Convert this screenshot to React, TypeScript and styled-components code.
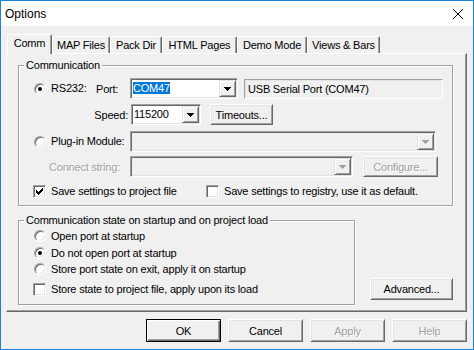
import React, { FC, ReactNode } from 'react';
import styled, { createGlobalStyle } from 'styled-components';

const GlobalStyle = createGlobalStyle`
  html, body {
    margin: 0;
    padding: 0;
    background: #f0f0f0;
  }

  * {
    box-sizing: border-box;
  }
`;

const Window = styled.div`
  width: 474px;
  height: 350px;
  display: flex;
  flex-direction: column;
  border: 1px solid #1883d7;
  background: #f0f0f0;
  color: #000;
  font-family: "Liberation Sans", Arial, sans-serif;
  font-size: 11px;
  letter-spacing: -0.2px;
  overflow: hidden;
`;

const TitleBar = styled.header`
  flex: none;
  height: 25px;
  display: flex;
  align-items: center;
  justify-content: space-between;
  padding-left: 4px;
  background: #fff;
  font-size: 12px;
  letter-spacing: 0;
`;

const CloseBox = styled.div`
  width: 30px;
  height: 25px;
  display: flex;
  align-items: center;
  justify-content: center;
`;

const Body = styled.div`
  flex: 1;
  display: flex;
  flex-direction: column;
  padding: 8px 6px 7px 5px;
`;

const TabStrip = styled.div`
  flex: none;
  height: 19px;
  display: flex;
  align-items: flex-end;
  padding-left: 1px;
  position: relative;
  z-index: 1;
`;

const Tab = styled.div<{ $w: number; $active?: boolean }>`
  flex: none;
  width: ${p => p.$w}px;
  height: ${p => (p.$active ? 20 : 17)}px;
  margin-bottom: ${p => (p.$active ? -1 : 0)}px;
  display: flex;
  justify-content: center;
  padding-top: 2px;
  line-height: 13px;
  background: #f0f0f0;
  border: 1px solid;
  border-bottom: none;
  border-color: #fff #696969 transparent #fff;
  border-radius: 2px 2px 0 0;
  box-shadow: inset -1px 0 0 #a0a0a0;
  white-space: nowrap;
`;

const Panel = styled.section`
  flex: none;
  height: 259px;
  display: flex;
  flex-direction: column;
  padding: 11px 13px 0 11px;
  border: 1px solid;
  border-color: #fff #696969 #696969 #fff;
  box-shadow: inset -1px -1px 0 #a0a0a0;
`;

const GroupBox = styled.div<{ $w?: number; $mt?: number }>`
  flex: none;
  width: ${p => (p.$w ? `${p.$w}px` : 'auto')};
  margin-top: ${p => p.$mt ?? 0}px;
  display: flex;
  flex-direction: column;
  padding: 0 0 7px 14px;
  border: 1px solid #a0a0a0;
  box-shadow: inset 1px 1px 0 #fff, 1px 1px 0 #fff;
`;

const Caption = styled.div`
  align-self: flex-start;
  margin: -7px 0 0 -9px;
  padding: 0 2px;
  line-height: 13px;
  background: #f0f0f0;
  white-space: nowrap;
`;

const Row = styled.div<{ $h: number; $mt: number }>`
  flex: none;
  height: ${p => p.$h}px;
  margin-top: ${p => p.$mt}px;
  display: flex;
  align-items: center;
`;

const Option = styled.label<{ $w?: number; $indent?: number }>`
  flex: none;
  width: ${p => (p.$w ? `${p.$w}px` : 'auto')};
  padding-left: ${p => p.$indent ?? 0}px;
  display: flex;
  align-items: center;
  gap: 5px;
  line-height: 13px;
  white-space: nowrap;
`;

const FieldLabel = styled.span<{ $w: number; $right?: boolean; $indent?: number; $disabled?: boolean }>`
  flex: none;
  width: ${p => p.$w}px;
  padding-left: ${p => p.$indent ?? 0}px;
  padding-right: ${p => (p.$right ? 3 : 0)}px;
  text-align: ${p => (p.$right ? 'right' : 'left')};
  color: ${p => (p.$disabled ? '#a0a0a0' : '#000')};
  text-shadow: ${p => (p.$disabled ? '1px 1px 0 #fff' : 'none')};
  white-space: nowrap;
`;

const RadioMark = styled.span<{ $on?: boolean }>`
  flex: none;
  width: 12px;
  height: 12px;
  display: flex;
  align-items: center;
  justify-content: center;
  border-radius: 50%;
  border: 1px solid;
  border-color: #a0a0a0 #fff #fff #a0a0a0;
  background: #fff;
  box-shadow: inset 1px 1px 0 #696969, inset -1px -1px 0 #e3e3e3;

  &::after {
    content: '';
    display: ${p => (p.$on ? 'block' : 'none')};
    width: 4px;
    height: 4px;
    border-radius: 50%;
    background: #000;
  }
`;

const CheckMark = styled.span`
  flex: none;
  width: 13px;
  height: 13px;
  display: flex;
  align-items: center;
  justify-content: center;
  border: 1px solid;
  border-color: #a0a0a0 #fff #fff #a0a0a0;
  background: #fff;
  box-shadow: inset 1px 1px 0 #696969, inset -1px -1px 0 #e3e3e3;
`;

const ComboFrame = styled.div<{ $w: number; $ml?: number; $disabled?: boolean }>`
  flex: none;
  width: ${p => p.$w}px;
  height: 21px;
  margin-left: ${p => p.$ml ?? 0}px;
  display: flex;
  align-items: center;
  padding: 1px;
  border: 1px solid;
  border-color: #a0a0a0 #fff #fff #a0a0a0;
  background: ${p => (p.$disabled ? '#f0f0f0' : '#fff')};
  box-shadow: inset 1px 1px 0 #696969, inset -1px -1px 0 #e3e3e3;
`;

const ComboText = styled.div`
  flex: 1;
  padding-left: 1px;
  line-height: 13px;
  white-space: nowrap;
  overflow: hidden;
`;

const Selected = styled.span`
  background: #0078d7;
  color: #fff;
`;

const DropButton = styled.div`
  flex: none;
  width: 17px;
  align-self: stretch;
  display: flex;
  align-items: center;
  justify-content: center;
  border: 1px solid;
  border-color: #e3e3e3 #696969 #696969 #e3e3e3;
  background: #f0f0f0;
  box-shadow: inset 1px 1px 0 #fff, inset -1px -1px 0 #a0a0a0;
`;

const ReadOnlyField = styled.div<{ $w: number; $ml: number }>`
  flex: none;
  width: ${p => p.$w}px;
  height: 20px;
  margin-left: ${p => p.$ml}px;
  display: flex;
  align-items: center;
  padding-left: 3px;
  border: 1px solid;
  border-color: #a0a0a0 #fff #fff #a0a0a0;
  box-shadow: inset 1px 1px 0 #e3e3e3;
  white-space: nowrap;
`;

const Button = styled.button<{ $w: number; $h?: number; $ml?: number; $mb?: number; $default?: boolean }>`
  flex: none;
  width: ${p => p.$w}px;
  height: ${p => p.$h ?? 23}px;
  margin: 0 0 ${p => p.$mb ?? 0}px ${p => p.$ml ?? 0}px;
  padding: 0;
  font: inherit;
  letter-spacing: inherit;
  color: #000;
  background: #f0f0f0;
  border: 1px solid;
  border-color: ${p => (p.$default ? '#000' : '#fff #696969 #696969 #fff')};
  box-shadow: ${p =>
    p.$default
      ? 'inset 1px 1px 0 #fff, inset -1px -1px 0 #696969, inset -2px -2px 0 #a0a0a0'
      : 'inset 1px 1px 0 #e3e3e3, inset -1px -1px 0 #a0a0a0'};

  &:disabled {
    color: #a0a0a0;
    text-shadow: 1px 1px 0 #fff;
  }
`;

const LowerRow = styled.div`
  display: flex;
  align-items: flex-end;
  justify-content: space-between;
`;

const Footer = styled.footer`
  flex: none;
  display: flex;
  justify-content: flex-end;
  gap: 7px;
  margin-top: 7px;
`;

const Arrow: FC<{ disabled?: boolean }> = ({ disabled }) => (
  <svg width="7" height="4" viewBox="0 0 7 4" shapeRendering="crispEdges">
    <path d="M0 0h7v1H0zM1 1h5v1H1zM2 2h3v1H2zM3 3h1v1H3z" fill={disabled ? '#a0a0a0' : '#000'} />
  </svg>
);

const Tick: FC = () => (
  <svg width="7" height="7" viewBox="0 0 7 7" shapeRendering="crispEdges">
    <path
      d="M0 2h1v3H0zM1 3h1v3H1zM2 4h1v3H2zM3 3h1v3H3zM4 2h1v3H4zM5 1h1v3H5zM6 0h1v3H6z"
      fill="#000"
    />
  </svg>
);

interface ComboProps {
  w: number;
  ml?: number;
  disabled?: boolean;
  children?: ReactNode;
}

const Combo: FC<ComboProps> = ({ w, ml, disabled, children }) => (
  <ComboFrame $w={w} $ml={ml} $disabled={disabled}>
    <ComboText>{children}</ComboText>
    <DropButton>
      <Arrow disabled={disabled} />
    </DropButton>
  </ComboFrame>
);

const Radio: FC<{ on?: boolean; w?: number; children: ReactNode }> = ({ on, w, children }) => (
  <Option $w={w} $indent={1}>
    <RadioMark $on={on} />
    {children}
  </Option>
);

const Check: FC<{ on?: boolean; w?: number; children: ReactNode }> = ({ on, w, children }) => (
  <Option $w={w}>
    <CheckMark>{on && <Tick />}</CheckMark>
    {children}
  </Option>
);

const tabs = [
  { label: 'Comm', w: 45 },
  { label: 'MAP Files', w: 58 },
  { label: 'Pack Dir', w: 52 },
  { label: 'HTML Pages', w: 75 },
  { label: 'Demo Mode', w: 70 },
  { label: 'Views & Bars', w: 73 },
];

const App: FC = function App() {
  return (
    <>
      <GlobalStyle />
      <Window>
        <TitleBar>
          <span>Options</span>
          <CloseBox>
            <svg width="10" height="10" viewBox="0 0 10 10">
              <path d="M0 0L10 10M10 0L0 10" stroke="#000" strokeWidth="1" />
            </svg>
          </CloseBox>
        </TitleBar>

        <Body>
          <TabStrip>
            {tabs.map((t, i) => (
              <Tab key={t.label} $w={t.w} $active={i === 0}>
                {t.label}
              </Tab>
            ))}
          </TabStrip>

          <Panel>
            <GroupBox>
              <Caption>Communication</Caption>
              <Row $h={21} $mt={6}>
                <Radio on w={63}>RS232:</Radio>
                <FieldLabel $w={34}>Port:</FieldLabel>
                <Combo w={108}>
                  <Selected>COM47</Selected>
                </Combo>
                <ReadOnlyField $w={199} $ml={6}>USB Serial Port (COM47)</ReadOnlyField>
              </Row>
              <Row $h={21} $mt={5}>
                <FieldLabel $w={98} $right>Speed:</FieldLabel>
                <Combo w={70}>115200</Combo>
                <Button $w={63} $h={21} $ml={9}>Timeouts...</Button>
              </Row>
              <Row $h={21} $mt={6}>
                <Radio w={97}>Plug-in Module:</Radio>
                <Combo w={306} disabled />
              </Row>
              <Row $h={21} $mt={4}>
                <FieldLabel $w={97} $indent={16} $disabled>Connect string:</FieldLabel>
                <Combo w={223} disabled />
                <Button $w={75} $h={21} $ml={10} disabled>Configure...</Button>
              </Row>
              <Row $h={13} $mt={8}>
                <Check on w={173}>Save settings to project file</Check>
                <Check>Save settings to registry, use it as default.</Check>
              </Row>
            </GroupBox>

            <LowerRow>
              <GroupBox $w={337} $mt={14}>
                <Caption>Communication state on startup and on project load</Caption>
                <Row $h={16} $mt={1}>
                  <Radio>Open port at startup</Radio>
                </Row>
                <Row $h={16} $mt={1}>
                  <Radio on>Do not open port at startup</Radio>
                </Row>
                <Row $h={16} $mt={0}>
                  <Radio>Store port state on exit, apply it on startup</Radio>
                </Row>
                <Row $h={16} $mt={4}>
                  <Check>Store state to project file, apply upon its load</Check>
                </Row>
              </GroupBox>
              <Button $w={83} $h={22} $mb={5}>Advanced...</Button>
            </LowerRow>
          </Panel>

          <Footer>
            <Button $w={75} $default>OK</Button>
            <Button $w={75}>Cancel</Button>
            <Button $w={75} disabled>Apply</Button>
            <Button $w={75} disabled>Help</Button>
          </Footer>
        </Body>
      </Window>
    </>
  );
};

export default App;
